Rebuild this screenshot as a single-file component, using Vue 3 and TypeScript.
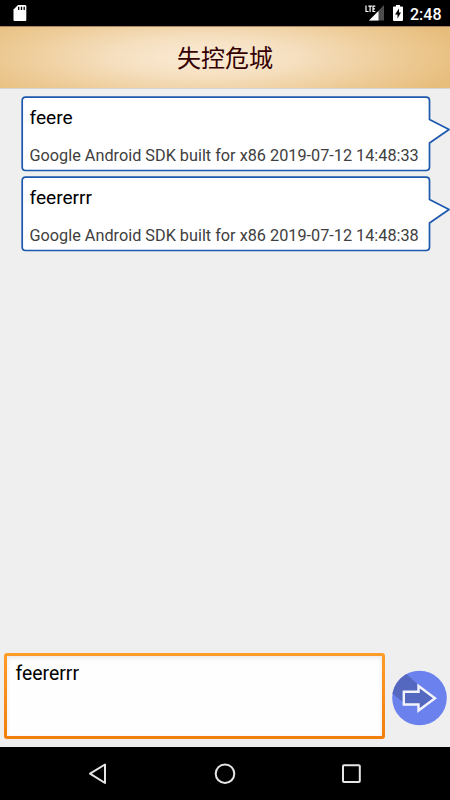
<script setup lang="ts">
import { ref } from 'vue'

interface Message {
  id: number
  text: string
  meta: string
}

const title = '失控危城'
const messages = ref<Message[]>([
  { id: 1, text: 'feere', meta: 'Google Android SDK built for x86 2019-07-12 14:48:33' },
  { id: 2, text: 'feererrr', meta: 'Google Android SDK built for x86 2019-07-12 14:48:38' },
])
const draft = ref('feererrr')

let nextId = 3
function send(): void {
  const text = draft.value.trim()
  if (!text) return
  const now = new Date()
  const p = (n: number) => String(n).padStart(2, '0')
  const day = `${now.getFullYear()}-${p(now.getMonth() + 1)}-${p(now.getDate())}`
  const time = `${p(now.getHours())}:${p(now.getMinutes())}:${p(now.getSeconds())}`
  messages.value.push({ id: nextId++, text, meta: `Google Android SDK built for x86 ${day} ${time}` })
}
</script>

<template>
  <div class="screen">
    <div class="status">
      <svg class="sd" width="14" height="16" viewBox="0 0 14 16">
        <path d="M5 0H12Q13.300 0 13.300 1.300V15Q13.300 16 12.300 16H1.500Q.5 16 .5 15V4.500Z" fill="#fff" />
        <path d="M5.700 1.700v3.300M8.500 1.700v3.300M11.200 1.700v3.300" stroke="#000" stroke-width="1.300" />
      </svg>
      <svg class="signal" width="20" height="17" viewBox="0 0 20 17">
        <path d="M19 1V16.500H4Z" fill="#4c4c4c" />
        <path d="M13.500 7V16.500H4Z" fill="#fff" />
        <path d="M0 0H11V9H0Z" fill="#000" />
        <path d="M1 1.500v6h2.500M3.300 2.100h3.600M5.100 2.100v5.900M10.300 2.100H8v5.400h2.300M8 4.800h2" fill="none" stroke="#fff" stroke-width="1.200" />
      </svg>
      <svg class="battery" width="10" height="16" viewBox="0 0 10 16">
        <path d="M3 0H7V1.500H9Q10 1.500 10 2.500V15Q10 16 9 16H1Q0 16 0 15V2.500Q0 1.500 1 1.500H3Z" fill="#fff" />
        <path d="M6 3.500L2 9.500H4.500V13.500L8 7.500H6Z" fill="#000" />
      </svg>
      <span class="clock">2:48</span>
    </div>

    <header class="title-bar">
      <h1>{{ title }}</h1>
    </header>

    <main class="messages">
      <article v-for="m in messages" :key="m.id" class="bubble">
        <svg class="outline" width="429" height="76" viewBox="0 0 429 76">
          <path
            d="M4 1.200H405Q408.500 1.200 408.500 4.700V23.500L428 33.500L408.500 47V71Q408.500 74.500 405 74.500H4.500Q1.200 74.500 1.200 71V4.700Q1.200 1.200 4.500 1.200Z"
            fill="#fff"
            stroke="#1b58ae"
            stroke-width="1.700"
            stroke-linejoin="round"
          />
        </svg>
        <p class="text">{{ m.text }}</p>
        <p class="meta">{{ m.meta }}</p>
      </article>
    </main>

    <footer class="composer">
      <div class="field">
        <textarea v-model="draft" spellcheck="false"></textarea>
      </div>
      <button class="send" type="button" aria-label="Send" @click="send">
        <svg width="56" height="56" viewBox="0 0 56 56">
          <defs>
            <clipPath id="disc"><circle cx="28.500" cy="28" r="27.300" /></clipPath>
          </defs>
          <circle cx="28.500" cy="28" r="27.300" fill="#6a81ee" />
          <path d="M0 22.500V0H11L28 15.500V34H14.500Z" fill="#5468bf" clip-path="url(#disc)" />
          <path d="M12.800 21.700H27.500V16L44 28.300L27.500 40.500V34.500H12.800Z" fill="#5468bf" stroke="#f3f4fb" stroke-width="2.400" />
        </svg>
      </button>
    </footer>

    <nav class="nav">
      <svg width="24" height="24" viewBox="0 0 24 24">
        <path d="M19 2.500V21L4 11.700Z" />
      </svg>
      <svg width="24" height="24" viewBox="0 0 24 24">
        <circle cx="12" cy="11.700" r="9.300" />
      </svg>
      <svg width="24" height="24" viewBox="0 0 24 24">
        <rect x="4" y="3.300" width="16.800" height="16.800" rx="1" />
      </svg>
    </nav>
  </div>
</template>

<style>
body {
  margin: 0;
}
</style>

<style scoped>
.screen {
  width: 450px;
  height: 800px;
  display: flex;
  flex-direction: column;
  overflow: hidden;
  background: #efefef;
  font-family: Roboto, 'Noto Sans CJK SC', sans-serif;
}
.status {
  height: 26px;
  flex: none;
  box-sizing: border-box;
  display: flex;
  align-items: flex-start;
  padding: 5px 9px 0 13px;
  background: #000;
}
.signal {
  margin: -1px 0 0 auto;
}
.battery {
  margin-left: 8px;
}
.clock {
  margin-left: 7px;
  width: 31px;
  color: #fff;
  font-size: 16px;
  line-height: 19px;
  font-weight: 500;
  white-space: nowrap;
}
.title-bar {
  height: 63px;
  flex: none;
  box-sizing: border-box;
  display: flex;
  align-items: center;
  justify-content: center;
  border-top: 1px solid #a58661;
  border-bottom: 1px solid #d5d3d3;
  background: radial-gradient(ellipse 265px 58px at 205px 30px, #fbebd5 0%, #f5dfbf 35%, #efcf9e 65%, #e7bd7c 100%);
}
h1 {
  margin: 0;
  padding-bottom: 2px;
  font-family: 'Noto Sans CJK SC', sans-serif;
  font-size: 24px;
  font-weight: 400;
  line-height: 36px;
  color: #350000;
}
.messages {
  flex: 1;
  min-height: 0;
  display: flex;
  flex-direction: column;
  gap: 4px;
  padding: 7px 0 0 21px;
}
.bubble {
  position: relative;
  height: 76px;
  flex: none;
  box-sizing: border-box;
  padding: 10px 0 0 8.500px;
}
.outline {
  position: absolute;
  left: 0;
  top: 0;
}
.text,
.meta {
  position: relative;
  margin: 0;
  white-space: nowrap;
}
.text {
  font-size: 19.100px;
  line-height: 24px;
  color: #000;
}
.meta {
  margin-top: 16px;
  font-size: 16.250px;
  line-height: 20px;
  color: #404040;
}
.composer {
  height: 94px;
  flex: none;
  box-sizing: border-box;
  display: flex;
  gap: 6px;
  padding: 0 3px 8px 4px;
}
.field {
  flex: 1;
  box-sizing: border-box;
  padding: 3px;
  border-radius: 3px;
  background: linear-gradient(#ff9c2a, #f27e0b);
}
textarea {
  display: block;
  width: 100%;
  height: 100%;
  box-sizing: border-box;
  margin: 0;
  padding: 6px 8.500px 4px;
  border: 0;
  outline: 0;
  resize: none;
  background: #fefefe;
  box-shadow: inset 0 2px 4px #e8e8e8;
  font: 19.400px/24px Roboto, 'Noto Sans CJK SC', sans-serif;
  color: #000;
}
.send {
  width: 56px;
  height: 56px;
  margin: 17px 0 0;
  padding: 0;
  border: 0;
  background: none;
}
.send svg {
  display: block;
}
.nav {
  height: 53px;
  flex: none;
  box-sizing: border-box;
  display: flex;
  align-items: center;
  justify-content: space-between;
  padding: 0 87px 0 86px;
  background: #000;
}
.nav svg {
  fill: none;
  stroke: #e6e6e6;
  stroke-width: 2;
  stroke-linejoin: round;
}
</style>
